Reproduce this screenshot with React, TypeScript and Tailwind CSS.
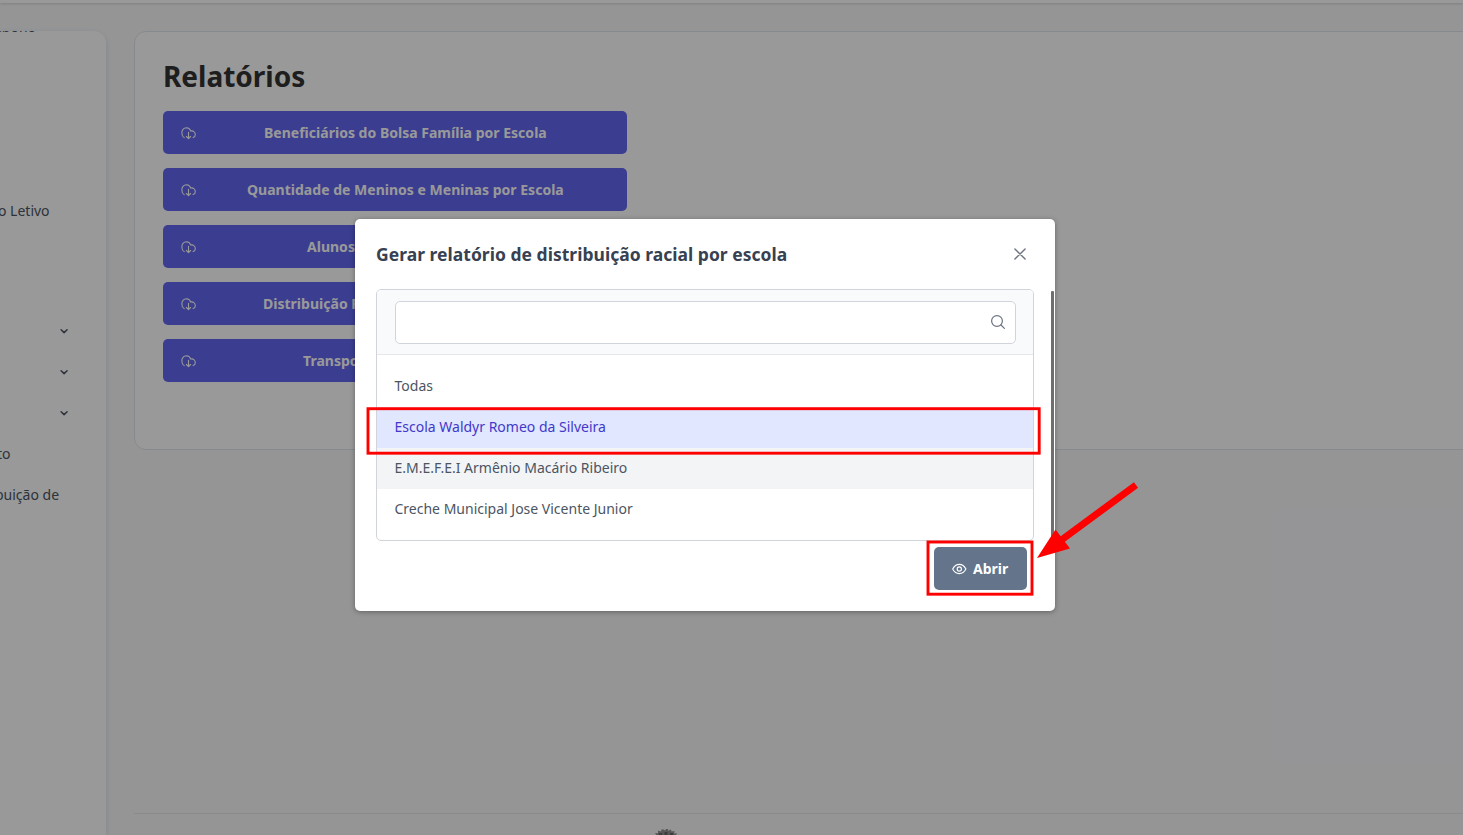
import React from "react";

const CLOUD =
  "M3.200 11.600A5 5 0 0 1 .9 7.100 4.700 4.700 0 0 1 5.500 1.800 4.700 4.700 0 0 1 9.700 5.100 3.500 3.500 0 0 1 14.300 8.400 3.300 3.300 0 0 1 12.100 11.600M7.500 6.300v6.200M5.400 10.500l2.100 2.100 2.100-2.100";

const reports = [
  { label: "Beneficiários do Bolsa Família por Escola", pad: "pl-[68px]" },
  { label: "Quantidade de Meninos e Meninas por Escola", pad: "pl-[51px]" },
  { label: "Alunos por Turma e Escola", pad: "pl-[111px]" },
  { label: "Distribuição Racial dos Alunos por Escola", pad: "pl-[67px]" },
  { label: "Transporte Escolar por Escola", pad: "pl-[107px]" },
];

function ReportButton({ label, pad }: { label: string; pad: string }) {
  return (
    <button className="flex h-[43px] w-full items-center rounded-[5px] bg-[#6366f1] pl-[18px] text-[14px] font-bold tracking-[0.015px] text-white">
      <svg width="15" height="14" viewBox="0 0 15 14" fill="none" stroke="currentColor" strokeWidth="1.1" strokeLinecap="round" strokeLinejoin="round">
        <path d={CLOUD} />
      </svg>
      <span className={"whitespace-nowrap " + pad}>{label}</span>
    </button>
  );
}

function Chevron() {
  return (
    <svg className="ml-[59px]" width="10" height="10" viewBox="0 0 10 10" fill="none" stroke="#4b5563" strokeWidth="1.5" strokeLinecap="round" strokeLinejoin="round">
      <path d="M2.100 3.700 5.100 6.600l3-2.900" />
    </svg>
  );
}

function Sidebar() {
  return (
    <aside className="h-[804px] w-[106px] shrink-0 overflow-hidden rounded-tr-[12px] bg-white text-[14px] text-[#4b5563] shadow-[0_2px_6px_rgba(0,0,0,0.12)]">
      <div className="-mt-[14px] h-[173px] whitespace-nowrap leading-[20px]">
        <span className="-ml-[6px]">abono</span>
      </div>
      <div className="flex h-[41px] items-center whitespace-nowrap"><span className="-ml-[2px]">o Letivo</span></div>
      <div className="h-[79px]" />
      <div className="flex h-[41px] items-center"><Chevron /></div>
      <div className="flex h-[41px] items-center"><Chevron /></div>
      <div className="flex h-[41px] items-center"><Chevron /></div>
      <div className="flex h-[41px] items-center whitespace-nowrap"><span className="-ml-[3px]">to</span></div>
      <div className="flex h-[41px] items-center whitespace-nowrap"><span className="-ml-[5px]">buição de</span></div>
    </aside>
  );
}

function Dialog() {
  return (
    <div className="flex h-[392px] w-[700px] flex-col rounded-[5px] bg-white text-[#4b5563] shadow-[0_1px_5px_rgba(0,0,0,0.35)]">
      <div className="flex h-[70px] shrink-0 items-center justify-between pl-[21px] pr-[28px]">
        <h2 className="text-[17.5px] font-bold tracking-[0.02px] text-[#374151]">Gerar relatório de distribuição racial por escola</h2>
        <svg width="14" height="14" viewBox="0 0 14 14" fill="none" stroke="#6b7280" strokeWidth="1.4" strokeLinecap="round">
          <path d="m1.900 1.900 10.200 10.200M12.100 1.900 1.900 12.100" />
        </svg>
      </div>
      <div className="flex">
        <div className="ml-[21px] w-[658px]">
          <div className="h-[252px] overflow-hidden rounded-[5px] border border-[#d1d5db]">
            <div className="flex h-[65px] items-center border-b border-[#e5e7eb] bg-[#f9fafb] pl-[18px] pr-[17px]">
              <div className="flex h-[43px] w-full items-center justify-end rounded-[5px] border border-[#d1d5db] bg-white pr-[10px]">
                <svg width="14" height="14" viewBox="0 0 14 14" fill="none" stroke="#6b7280" strokeWidth="1.200" strokeLinecap="round">
                  <circle cx="6" cy="6" r="5.400" />
                  <path d="m10 10 3.400 3.400" />
                </svg>
              </div>
            </div>
            <ul className="pt-[11px] text-[14px]">
              <li className="flex h-[41px] items-center pb-[2px] pl-[17.5px]">Todas</li>
              <li className="flex h-[41px] items-center bg-[#e0e7ff] pb-[2px] pl-[17.5px] text-[#4338ca]">Escola Waldyr Romeo da Silveira</li>
              <li className="flex h-[41px] items-center bg-[#f3f4f6] pb-[2px] pl-[17.5px]">E.M.E.F.E.I Armênio Macário Ribeiro</li>
              <li className="flex h-[41px] items-center pb-[2px] pl-[17.5px]">Creche Municipal Jose Vicente Junior</li>
            </ul>
          </div>
          <div className="flex justify-end pr-[7px] pt-[6px]">
            <button className="flex h-[43px] w-[93px] items-center rounded-[5px] bg-[#64748b] pl-[18px] text-[14px] font-bold tracking-[0.02px] text-white">
              <svg width="15" height="14" viewBox="0 0 15 14" fill="none" stroke="currentColor" strokeWidth="1.150">
                <path d="M.7 7C2.200 4.100 4.500 2.400 7.300 2.400S12.400 4.100 13.900 7C12.400 9.900 10.100 11.600 7.300 11.600S2.200 9.900.7 7Z" strokeLinejoin="round" />
                <circle cx="7.300" cy="7" r="2.100" />
              </svg>
              <span className="ml-[6px]">Abrir</span>
            </button>
          </div>
        </div>
        <div className="ml-[17px] mt-[2px] h-[249px] w-[3px] rounded-t-[1px] bg-[#6e6e6e]" />
      </div>
    </div>
  );
}

export default function App() {
  return (
    <div className="relative h-[835px] w-[1463px] overflow-hidden bg-[#f8f9fb] font-['Noto_Sans',sans-serif]">
      <header className="h-[3px] bg-white shadow-[0_1px_3px_rgba(0,0,0,0.15)]" />
      <div className="mt-[28px] flex">
        <Sidebar />
        <main className="ml-[28px] flex-1">
          <section className="-mr-[20px] h-[419px] rounded-[12px] border border-[#dfe7ef] bg-white px-[28px] pt-[23px]">
            <h1 className="h-[56px] text-[28px] font-bold leading-[42px] text-[#333333]">Relatórios</h1>
            <div className="flex w-[464px] flex-col gap-[14px]">
              {reports.map((r) => (
                <ReportButton key={r.label} label={r.label} pad={r.pad} />
              ))}
            </div>
          </section>
          <footer className="mt-[363px] flex border-t border-[#e5e7eb] pl-[520px] pt-[14px]">
            <svg width="24" height="24" viewBox="0 0 24 24">
              <path d="M3 8 1 5l3 .2L4 2.500l3 1 .5-2h2.500l1 1.200L12 1h2v1.700l3-1.200.5 2 3-.5-.3 2.500 3-.3-2 3v16H3Z" fill="#929292" />
              <path d="M5 5h3v2H5zM10.500 4h3v3h-3zM16 5h3v2h-3z" fill="#666666" />
            </svg>
          </footer>
        </main>
      </div>
      <div className="absolute inset-0 bg-black/40" />
      <div className="absolute left-[355px] top-[219px]">
        <Dialog />
      </div>
      <svg className="absolute left-0 top-0" width="1463" height="835" viewBox="0 0 1463 835" fill="none">
        <rect x="368" y="408.700" width="671.200" height="44.500" stroke="#ff0000" strokeWidth="2.900" />
        <rect x="928" y="542" width="104" height="52.200" stroke="#ff0000" strokeWidth="2.900" />
        <path d="M1136 485 1058 542.500" stroke="#ff0000" strokeWidth="7" />
        <path d="m1037 558 18.500-28.500 14.500 19Z" fill="#ff0000" />
      </svg>
    </div>
  );
}
